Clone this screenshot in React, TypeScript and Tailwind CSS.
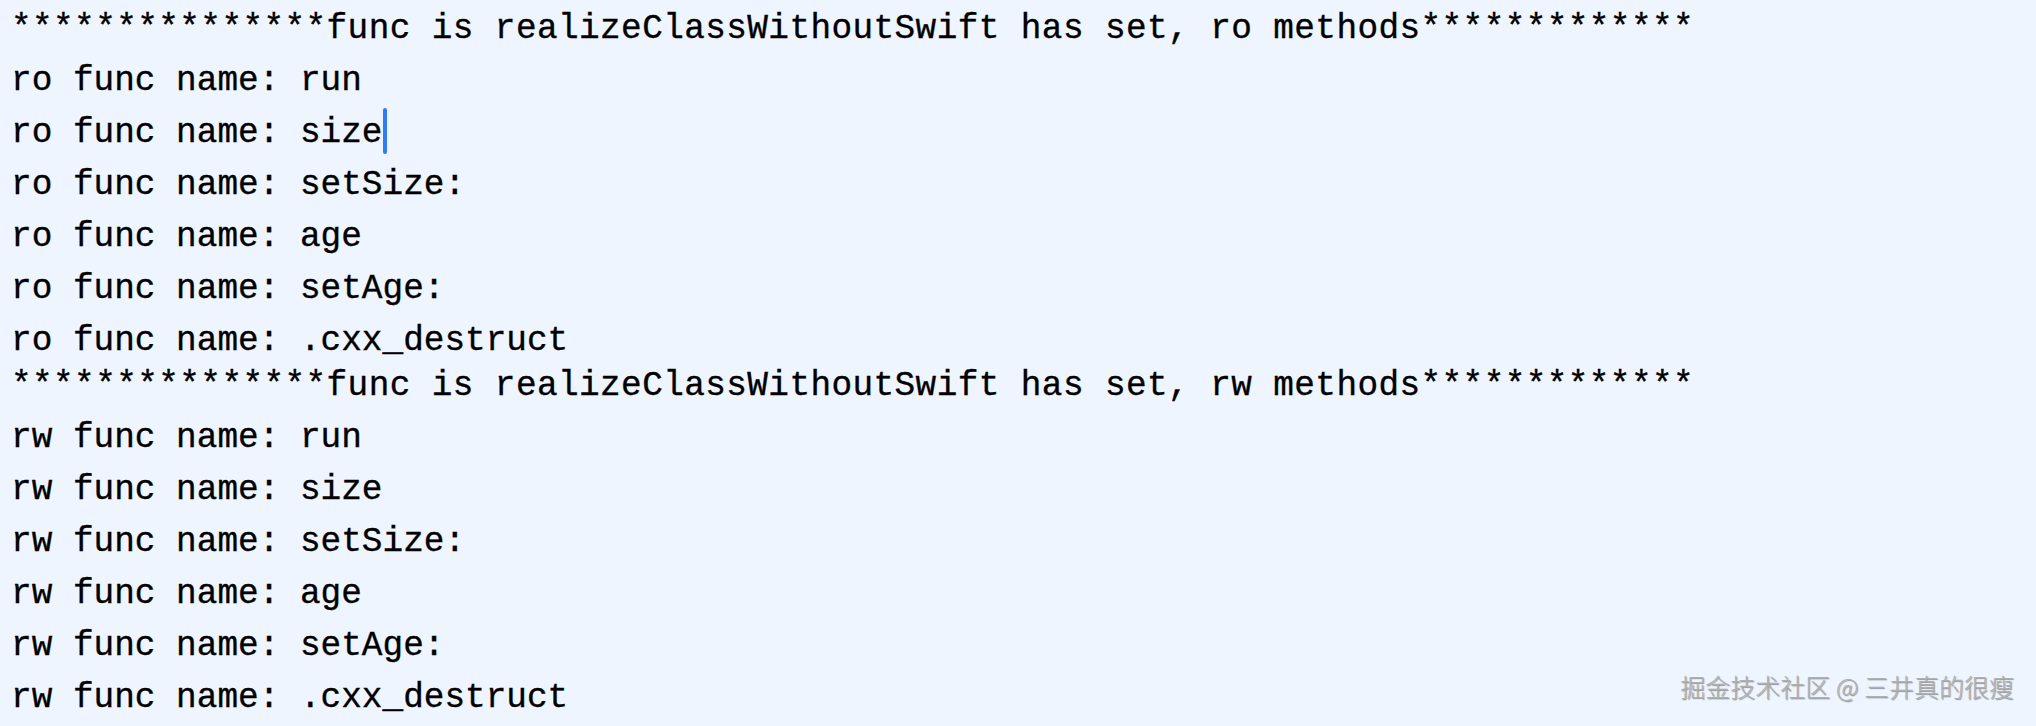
import React from 'react';

const roLines = ['run', 'size', 'setSize:', 'age', 'setAge:', '.cxx_destruct'];
const rwLines = ['run', 'size', 'setSize:', 'age', 'setAge:', '.cxx_destruct'];

const header = (kind: string) =>
  '***************func is realizeClassWithoutSwift has set, ' + kind + ' methods*************';

export default function App() {
  return (
    <div className="relative w-full h-[726px] overflow-hidden bg-[#eef5fe] text-black">
      <div className="flex flex-col pt-[3px] pl-[11px] font-['Liberation_Mono',monospace] text-[34.4px] leading-[52px] whitespace-pre [-webkit-text-stroke:0.35px_black]">
        <div className="tracking-[0.4px]">{header('ro')}</div>
        {roLines.map((name) => (
          <div key={'ro-' + name}>
            ro func name: {name}
            {name === 'size' && (
              <span className="inline-block w-[4px] h-[46px] align-middle -mt-[4px] rounded-sm bg-[#2f7bf5]" />
            )}
          </div>
        ))}
        <div className="-mt-[7px] tracking-[0.4px]">{header('rw')}</div>
        {rwLines.map((name) => (
          <div key={'rw-' + name}>rw func name: {name}</div>
        ))}
      </div>

      {/* juejin watermark */}
      <div className="absolute right-[22px] bottom-[27px] font-['Noto_Sans_CJK_SC',sans-serif] font-light text-[25px] leading-none text-[#b0b0b0] [text-shadow:1px_1px_1px_rgba(0,0,0,0.4)]">
        掘金技术社区 @ 三井真的很瘦
      </div>
    </div>
  );
}
